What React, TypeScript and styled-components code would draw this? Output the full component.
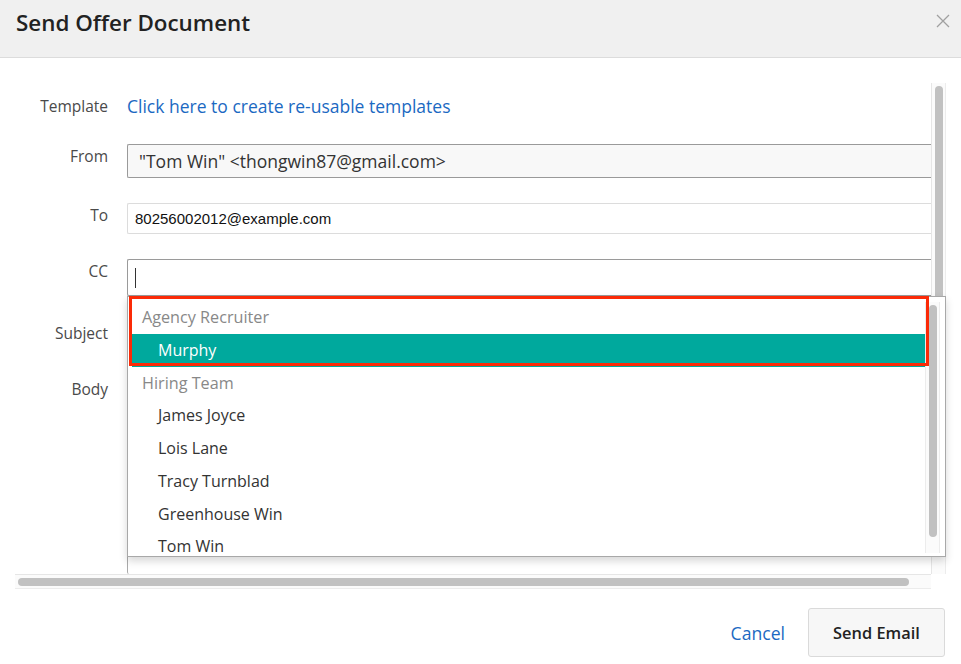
import styled, { createGlobalStyle } from 'styled-components';

const GlobalStyle = createGlobalStyle`
  html, body {
    margin: 0;
    padding: 0;
    background: #fff;
  }
  body {
    font-family: 'Open Sans', 'Liberation Sans', sans-serif;
    color: #333;
  }
  * {
    box-sizing: border-box;
  }
`;

const ccGroups = [
  { title: 'Agency Recruiter', people: ['Murphy'] },
  {
    title: 'Hiring Team',
    people: ['James Joyce', 'Lois Lane', 'Tracy Turnblad', 'Greenhouse Win', 'Tom Win'],
  },
];

const activePerson = 'Murphy';

export default function App() {
  return (
    <>
      <GlobalStyle />
      <Modal>
        <Header>
          <Title>Send Offer Document</Title>
          <CloseButton aria-label="Close">
            <svg width="14" height="14" viewBox="0 0 14 14">
              <path d="M1 1 L13 13 M13 1 L1 13" stroke="#a0a0a0" strokeWidth="1.3" fill="none" />
            </svg>
          </CloseButton>
        </Header>

        <Body>
          <ScrollArea>
            <Content>
              <Form>
                <Label $center>Template</Label>
                <TemplateLink href="#">Click here to create re-usable templates</TemplateLink>

                <Label>From</Label>
                <Field $h={34} $border="#9a9a9a" $bg="#f8f8f8">
                  <FromText>"Tom Win" &lt;thongwin87@gmail.com&gt;</FromText>
                </Field>

                <Label>To</Label>
                <Field $h={31} $border="#dcdcdc">
                  <ToText>80256002012@example.com</ToText>
                </Field>

                <Label>CC</Label>
                <Field $h={37} $border="#9a9a9a">
                  <Caret />
                  <Dropdown>
                    <OptionList>
                      {ccGroups.map((g) => (
                        <div key={g.title}>
                          <GroupTitle>{g.title}</GroupTitle>
                          {g.people.map((p) => (
                            <Option key={p} $active={p === activePerson}>
                              {p}
                            </Option>
                          ))}
                        </div>
                      ))}
                    </OptionList>
                    <ListTrack>
                      <ListThumb />
                    </ListTrack>
                    <Highlight />
                  </Dropdown>
                </Field>

                <Label>Subject</Label>
                <Field $h={31} $border="#dcdcdc" />

                <Label>Body</Label>
                <Field $h={197} $border="#aaaaaa" $open />
              </Form>
            </Content>
            <VTrack>
              <VThumb />
            </VTrack>
            <HTrack>
              <HThumb />
            </HTrack>
            <Corner />
          </ScrollArea>
        </Body>

        <Footer>
          <CancelLink>Cancel</CancelLink>
          <SendButton>Send Email</SendButton>
        </Footer>
      </Modal>
    </>
  );
}

const Modal = styled.div`
  width: 961px;
  height: 664px;
  display: flex;
  flex-direction: column;
  background: #fff;
  overflow: hidden;
`;

const Header = styled.header`
  height: 58px;
  flex-shrink: 0;
  display: flex;
  justify-content: space-between;
  align-items: flex-start;
  padding: 8px 11px 0 16px;
  background: #f0f0f0;
  border-bottom: 1px solid #dcdcdc;
`;

const Title = styled.h1`
  margin: 0;
  font-size: 22.4px;
  font-weight: 600;
  line-height: 30px;
  color: #222;
`;

const CloseButton = styled.button`
  margin-top: 6px;
  padding: 0;
  border: none;
  background: none;
  width: 14px;
  height: 14px;
  display: flex;
  cursor: pointer;
`;

const Body = styled.div`
  padding: 25px 15px 0 15px;
`;

const ScrollArea = styled.div`
  display: grid;
  grid-template-columns: 1fr 15px;
  grid-template-rows: 491px 15px;
`;

const Content = styled.div`
  padding-top: 11px;
  position: relative;
`;

const Form = styled.div`
  display: grid;
  grid-template-columns: 93px 1fr;
  column-gap: 19px;
  row-gap: 25px;
`;

const Label = styled.div<{ $center?: boolean }>`
  text-align: right;
  font-size: 15.5px;
  color: #4a4a4a;
  line-height: ${({ $center }) => ($center ? '25px' : '20px')};
  padding-top: ${({ $center }) => ($center ? '0' : '2px')};
`;

const TemplateLink = styled.a`
  display: block;
  height: 25px;
  line-height: 25px;
  font-size: 17.5px;
  color: #1b69c2;
  text-decoration: none;
`;

const Field = styled.div<{ $h: number; $border: string; $bg?: string; $open?: boolean }>`
  position: relative;
  height: ${({ $h }) => $h}px;
  border: 1px solid ${({ $border }) => $border};
  border-right: none;
  border-bottom: ${({ $open, $border }) => ($open ? 'none' : `1px solid ${$border}`)};
  border-radius: 2px 0 0 2px;
  background: ${({ $bg }) => $bg || '#fff'};
`;

const FromText = styled.div`
  padding-left: 11px;
  font-size: 17.5px;
  line-height: 32px;
  color: #333;
`;

const ToText = styled.div`
  padding-left: 7px;
  font-family: 'Liberation Sans', Arial, sans-serif;
  font-size: 15px;
  line-height: 30px;
  color: #111;
`;

const Caret = styled.span`
  position: absolute;
  left: 7px;
  top: 8px;
  width: 1px;
  height: 20px;
  background: #333;
`;

const Dropdown = styled.div`
  position: absolute;
  top: 36px;
  left: -1px;
  width: 819px;
  height: 261px;
  display: flex;
  background: #fff;
  border: 1px solid #a8a8a8;
  box-shadow: 0 4px 8px rgba(0, 0, 0, 0.16);
  z-index: 10;
`;

const OptionList = styled.div`
  flex: 1;
  padding: 4px 0 0 4px;
  overflow: hidden;
`;

const GroupTitle = styled.div`
  height: 32.75px;
  line-height: 32.75px;
  padding-left: 10px;
  font-size: 16.2px;
  color: #888;
`;

const Option = styled.div<{ $active?: boolean }>`
  height: 32.75px;
  line-height: 32.75px;
  padding-left: 26px;
  font-size: 16px;
  color: ${({ $active }) => ($active ? '#fff' : '#333')};
  background: ${({ $active }) => ($active ? '#00a99d' : 'transparent')};
`;

const ListTrack = styled.div`
  width: 15px;
  margin: 5px 5px 3px 0;
  padding-top: 3px;
  background: #fbfbfb;
  border-left: 1px solid #ececec;
  border-right: 1px solid #ececec;
`;

const ListThumb = styled.div`
  width: 8px;
  height: 232px;
  margin: 0 auto;
  border-radius: 4px;
  background: #c1c1c1;
`;

const Highlight = styled.div`
  position: absolute;
  left: 1px;
  top: -1px;
  width: 800px;
  height: 70px;
  border: 3px solid #fb2a07;
  pointer-events: none;
`;

const VTrack = styled.div`
  padding-top: 3px;
  background: #fbfbfb;
  border-left: 1px solid #e6e6e6;
  border-right: 1px solid #ececec;
`;

const VThumb = styled.div`
  width: 8px;
  height: 440px;
  margin: 0 auto;
  border-radius: 4px;
  background: #c1c1c1;
`;

const HTrack = styled.div`
  padding: 3px 0 0 3px;
  background: #fbfbfb;
  border-top: 1px solid #e6e6e6;
  border-bottom: 1px solid #ececec;
`;

const HThumb = styled.div`
  width: 891px;
  height: 8px;
  border-radius: 4px;
  background: #c1c1c1;
`;

const Corner = styled.div`
  background: #fff;
`;

const Footer = styled.footer`
  display: flex;
  justify-content: flex-end;
  align-items: center;
  gap: 23px;
  padding: 19px 16px 0;
`;

const CancelLink = styled.button`
  padding: 0;
  border: none;
  background: none;
  font-family: inherit;
  font-size: 17.6px;
  color: #1b69c2;
  cursor: pointer;
`;

const SendButton = styled.button`
  width: 137px;
  height: 49px;
  border: 1px solid #dadada;
  border-radius: 3px;
  background: #f7f7f7;
  font-family: inherit;
  font-size: 16.4px;
  font-weight: 600;
  color: #222;
  cursor: pointer;
`;
